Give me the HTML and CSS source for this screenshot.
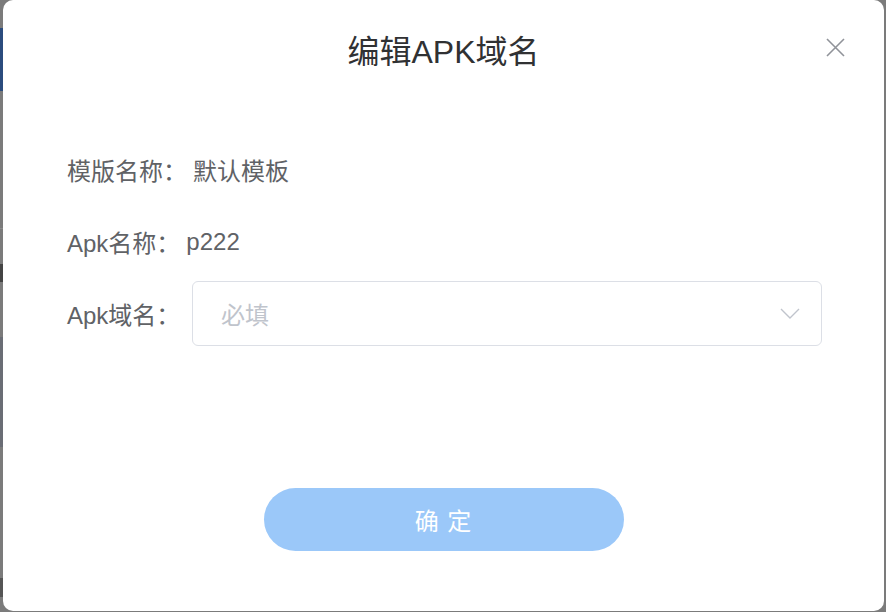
FILE: index.html
```html
<!DOCTYPE html>
<html lang="zh-CN">
<head>
<meta charset="utf-8">
<title>编辑APK域名</title>
<link rel="stylesheet" href="styles.css">
</head>
<body>
<div class="page">
  <div class="modal">
    <div class="header">
      <h1 class="title">编辑APK域名</h1>
      <button class="close" aria-label="关闭">
        <svg width="19" height="19" viewBox="0 0 19 19"><path d="M1 1 L18 18 M18 1 L1 18" stroke="#909399" stroke-width="1.6" fill="none"/></svg>
      </button>
    </div>
    <div class="body">
      <div class="row">
        <span class="text-label">模版名称：</span>
        <span class="value">默认模板</span>
      </div>
      <div class="row">
        <span class="text-label">Apk名称：</span>
        <span class="value">p222</span>
      </div>
      <div class="row">
        <span class="label">Apk域名：</span>
        <div class="select">
          <span class="placeholder">必填</span>
          <svg class="chevron" width="20" height="11" viewBox="0 0 20 11"><path d="M1 1 L10 10 L19 1" stroke="#c0c4cc" stroke-width="1.4" fill="none"/></svg>
        </div>
      </div>
    </div>
    <div class="footer">
      <button class="confirm">确 定</button>
    </div>
  </div>
</div>
</body>
</html>
```
FILE: styles.css
```css
html, body {
  margin: 0;
  padding: 0;
}
body {
  width: 886px;
  height: 612px;
  overflow: hidden;
  background-color: #7b7b7b;
  background-image: linear-gradient(to bottom,
    #7b7b7b 0, #7b7b7b 28px,
    #2b4c7e 28px, #2b4c7e 91px,
    #7b7b7b 91px, #7b7b7b 228px,
    #8c8c8c 228px, #8c8c8c 229px,
    #7b7b7b 229px, #7b7b7b 264px,
    #444444 264px, #444444 282px,
    #7b7b7b 282px, #7b7b7b 337px,
    #6a6d75 337px, #6a6d75 447px,
    #7b7b7b 447px, #7b7b7b 578px,
    #555555 578px, #555555 597px,
    #7b7b7b 597px);
  background-size: 3px 100%;
  background-repeat: no-repeat;
  font-family: "Liberation Sans", "Noto Sans CJK SC", sans-serif;
}
.page {
  box-sizing: border-box;
  height: 612px;
  padding: 0 2px 1px 3px;
  display: flex;
}
.modal {
  flex: 1;
  background: #ffffff;
  border-radius: 10px;
  display: flex;
  flex-direction: column;
}
.header {
  position: relative;
  height: 104px;
  display: flex;
  align-items: center;
  justify-content: center;
}
.title {
  margin: 0;
  font-size: 32px;
  font-weight: normal;
  color: #303133;
  line-height: 40px;
}
.close {
  position: absolute;
  top: 38px;
  right: 39px;
  padding: 0;
  border: 0;
  background: none;
  width: 19px;
  height: 19px;
  display: flex;
}
.body {
  padding: 33px 62px 0 64px;
  display: flex;
  flex-direction: column;
  gap: 7px;
}
.row {
  height: 65px;
  display: flex;
  align-items: center;
  font-size: 24px;
  color: #606266;
}
.label {
  width: 125px;
  flex: none;
}
.text-label {
  flex: none;
  margin-right: 6px;
}
.value {
  color: #606266;
}
.select {
  flex: 1;
  height: 65px;
  box-sizing: border-box;
  border: 1px solid #dcdfe6;
  border-radius: 6px;
  display: flex;
  align-items: center;
  justify-content: space-between;
  padding: 0 21px 0 28px;
}
.placeholder {
  color: #c0c4cc;
  font-size: 24px;
}
.footer {
  margin-top: 142px;
  display: flex;
  justify-content: center;
}
.confirm {
  width: 360px;
  height: 63px;
  border: 0;
  border-radius: 32px;
  background: #9bc8f9;
  color: #ffffff;
  font-family: "Liberation Sans", "Noto Sans CJK SC", sans-serif;
  font-size: 24px;
  letter-spacing: 1px;
  padding: 0;
}
```
